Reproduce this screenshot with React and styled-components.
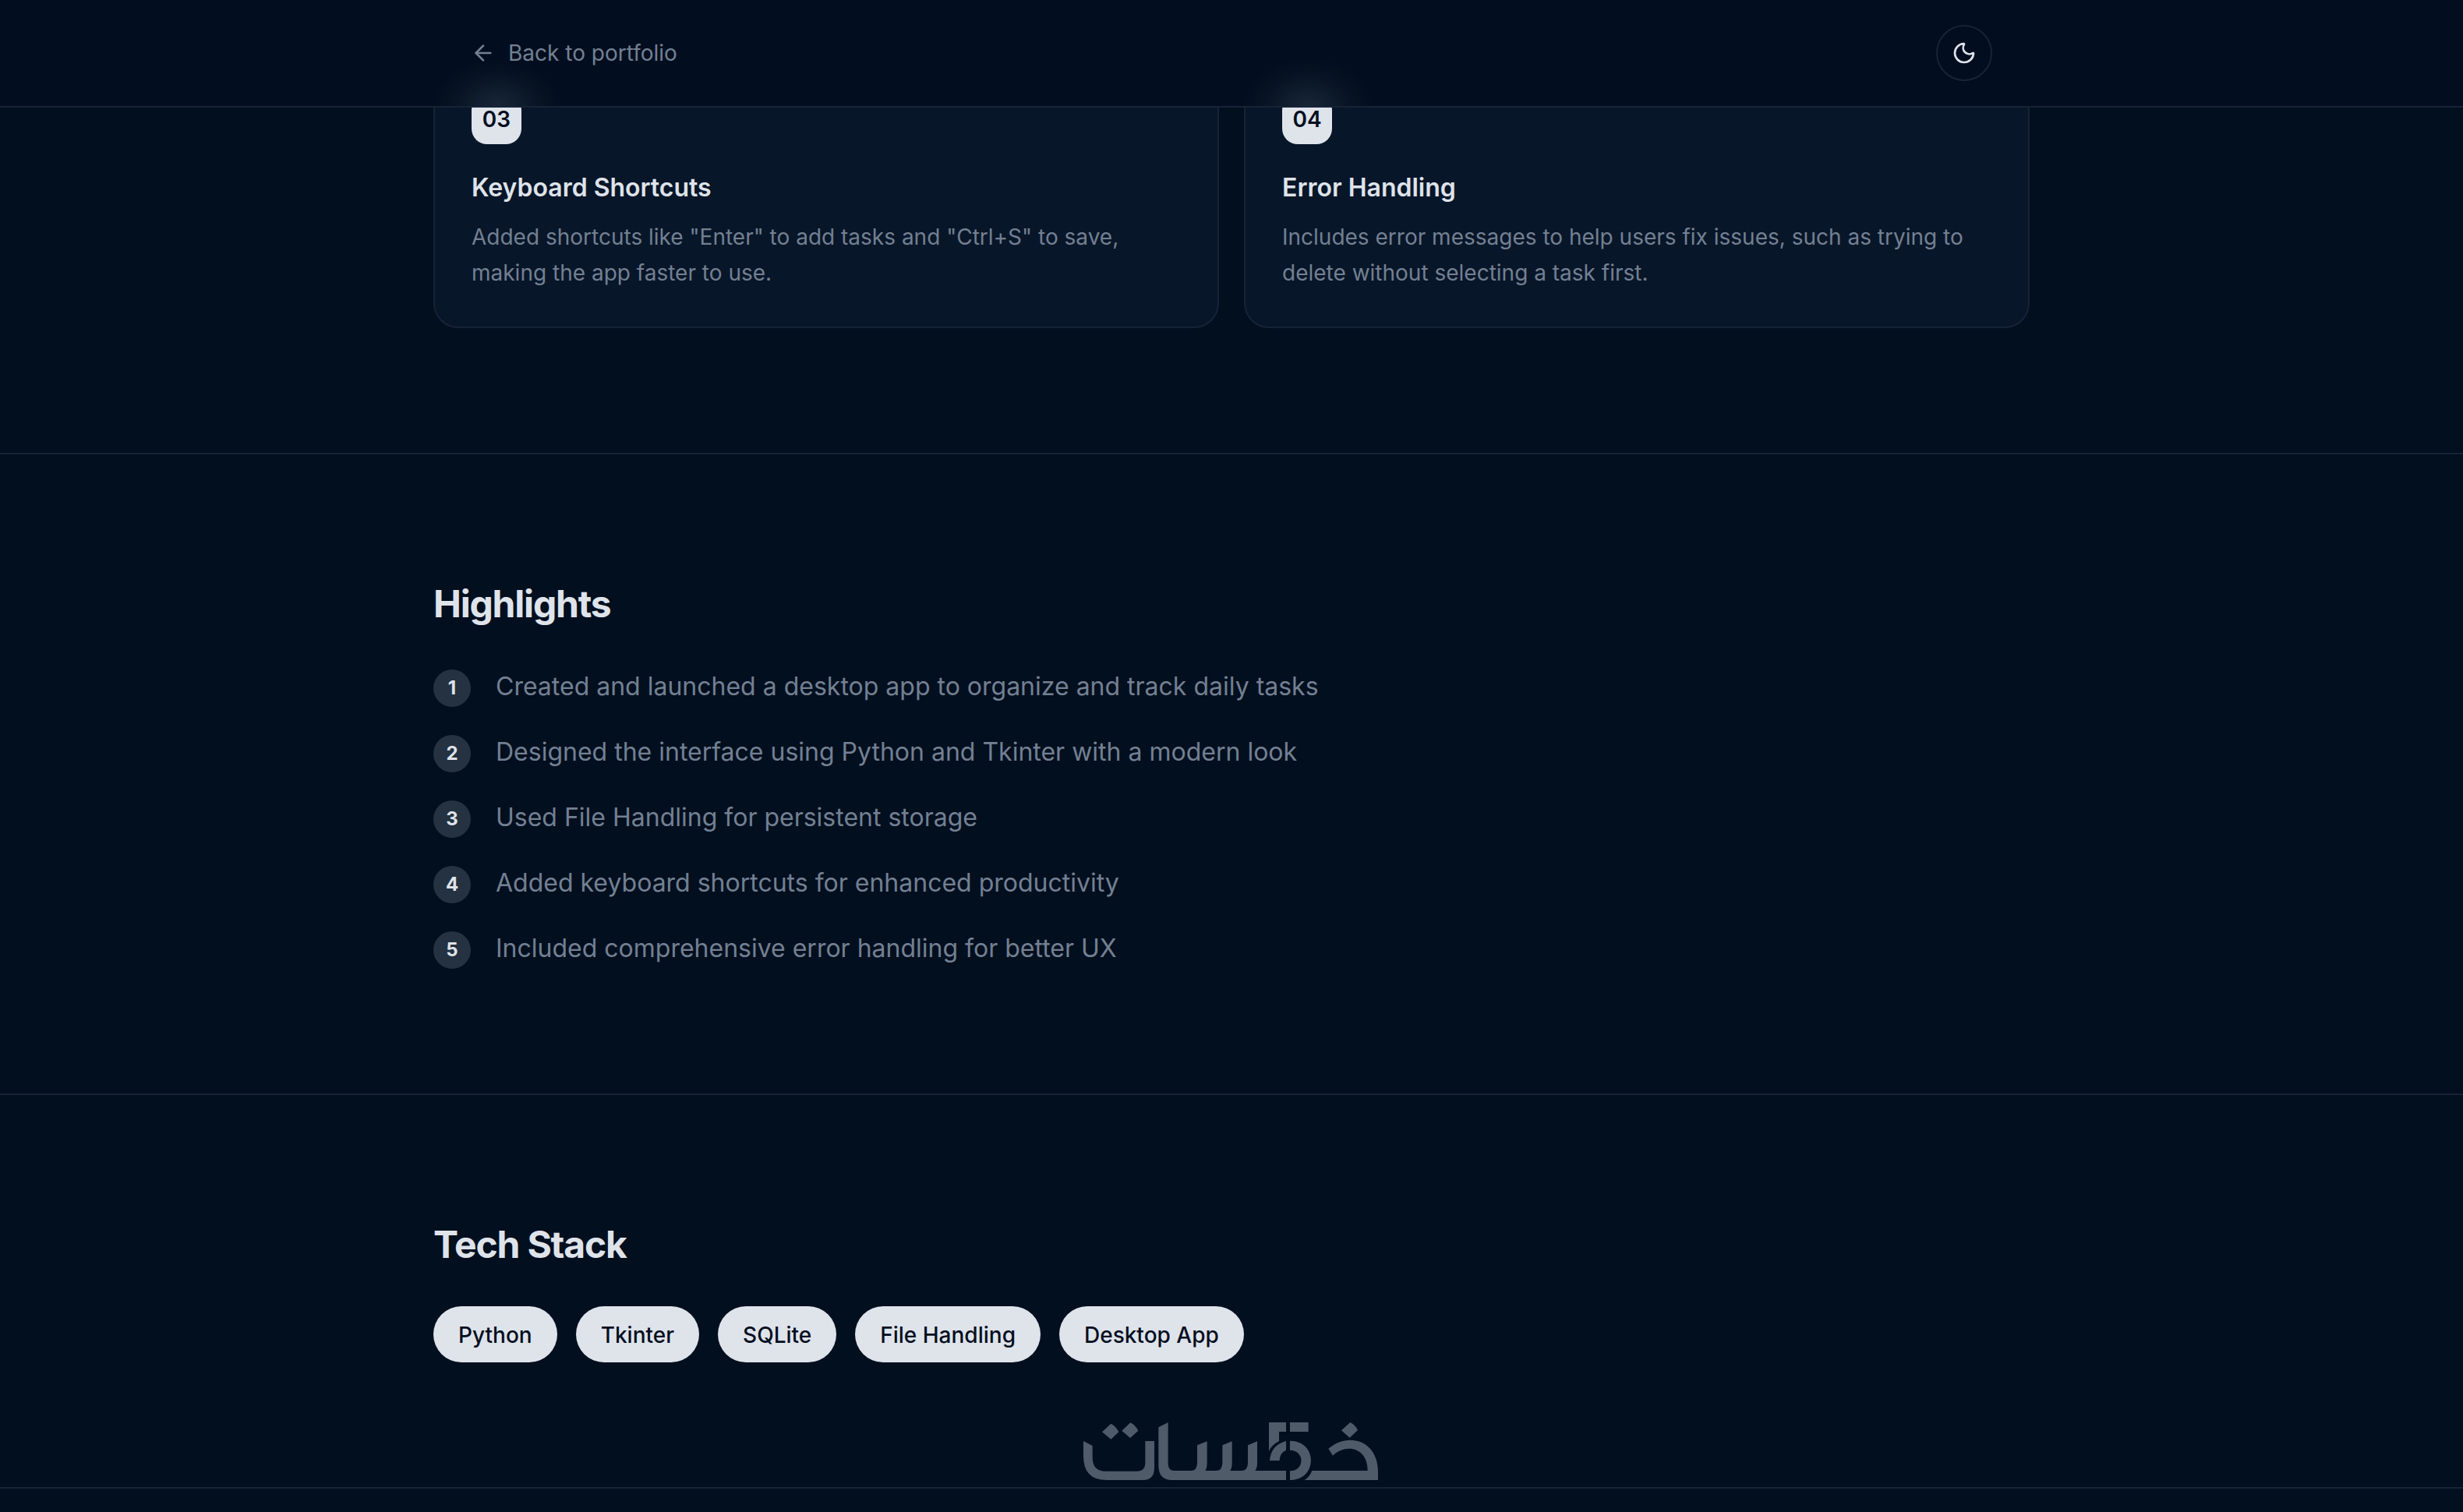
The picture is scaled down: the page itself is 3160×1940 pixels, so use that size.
import React from 'react';
import styled, { createGlobalStyle } from 'styled-components';
import { ArrowLeft, Moon } from 'lucide-react';

const GlobalStyle = createGlobalStyle`
  * {
    box-sizing: border-box;
    margin: 0;
    padding: 0;
  }

  body {
    background: #020f1f;
    color: #dfe3ea;
    font-family: Inter, 'Noto Sans', sans-serif;
    font-size: 32px;
    line-height: 48px;
    overflow: hidden;
    -webkit-font-smoothing: antialiased;
  }
`

const Page = styled.div`
  height: 1940px;
  overflow: hidden;
`

const Header = styled.header`
  position: fixed;
  top: 0;
  left: 0;
  right: 0;
  z-index: 10;
  height: 138px;
  border-bottom: 2px solid #172336;
  background: #020e1f;
`

// the two glows are the number badges shining through the bar
const Nav = styled.nav`
  display: flex;
  align-items: center;
  justify-content: space-between;
  width: 2048px;
  height: 136px;
  margin: 0 auto;
  padding: 0 48px;
  background:
    radial-gradient(84px 64px at 82px 138px, #182536 0%, #142132 20%, #0b1828 50%, #051021 80%, transparent 100%),
    radial-gradient(84px 64px at 1122px 138px, #182536 0%, #142132 20%, #0b1828 50%, #051021 80%, transparent 100%);
`

const BackLink = styled.a`
  display: flex;
  align-items: center;
  gap: 16px;
  color: #738092;
  font-size: 28px;
  line-height: 40px;
`

const ThemeButton = styled.button`
  display: flex;
  align-items: center;
  justify-content: center;
  width: 72px;
  height: 72px;
  border: 2px solid #172336;
  border-radius: 50%;
  background: transparent;
  color: #dfe3ea;
`

const Section = styled.section`
  padding: ${(props) => (props.$top ? props.$top : '160px')} 0 160px;
  border-bottom: 2px solid #162236;
`

const Container = styled.div`
  width: 2048px;
  margin: 0 auto;
`

const CardGrid = styled.div`
  display: grid;
  grid-template-columns: 1fr 1fr;
  gap: 32px;
`

const Card = styled.article`
  padding: 48px 47px 46px;
  border: 2px solid #172336;
  border-radius: 32px;
  background: #081629;
`

const Badge = styled.div`
  display: flex;
  align-items: center;
  justify-content: center;
  width: 64px;
  height: 64px;
  margin-bottom: 32px;
  border-radius: 20px;
  background: #dfe3ea;
  color: #020f1f;
  font-size: 28px;
  font-weight: 600;
  line-height: 40px;
`

const CardTitle = styled.h3`
  margin-bottom: 16px;
  font-size: 32px;
  font-weight: 600;
  line-height: 48px;
`

const CardText = styled.p`
  color: #738092;
  font-size: 28px;
  line-height: 46px;
`

const Heading = styled.h2`
  margin-bottom: ${(props) => (props.$gap ? props.$gap : '48px')};
  font-size: 48px;
  font-weight: 700;
  line-height: 64px;
  letter-spacing: -0.025em;
`

const List = styled.ul`
  display: flex;
  flex-direction: column;
  gap: 32px;
  list-style: none;
`

const ListItem = styled.li`
  display: flex;
  align-items: flex-start;
  gap: 32px;
  color: #738092;
  line-height: 52px;
`

const Marker = styled.span`
  display: flex;
  align-items: center;
  justify-content: center;
  width: 48px;
  height: 48px;
  margin-top: 4px;
  border-radius: 50%;
  background: #243241;
  color: #dfe3ea;
  font-size: 24px;
  font-weight: 700;
  line-height: 32px;
`

const Tags = styled.div`
  display: flex;
  gap: 24px;
`

const Tag = styled.span`
  padding: 17px 32px 15px;
  border-radius: 36px;
  background: #dfe3ea;
  color: #020f1f;
  font-size: 28px;
  font-weight: 500;
  line-height: 40px;
`

const Watermark = styled.div`
  position: fixed;
  top: 1825px;
  left: 1390px;
  z-index: 20;

  svg {
    display: block;
  }
`

const features = [
  {
    number: '03',
    title: 'Keyboard Shortcuts',
    text: 'Added shortcuts like "Enter" to add tasks and "Ctrl+S" to save, making the app faster to use.'
  },
  {
    number: '04',
    title: 'Error Handling',
    text: 'Includes error messages to help users fix issues, such as trying to delete without selecting a task first.'
  }
];

const highlights = [
  'Created and launched a desktop app to organize and track daily tasks',
  'Designed the interface using Python and Tkinter with a modern look',
  'Used File Handling for persistent storage',
  'Added keyboard shortcuts for enhanced productivity',
  'Included comprehensive error handling for better UX'
];

const stack = ['Python', 'Tkinter', 'SQLite', 'File Handling', 'Desktop App'];

// khamsat logo mark, built from strokes and blocks
const Logo = () => (
  <Watermark>
    <svg width="380" height="76" viewBox="0 0 1140 228" fill="#4f5b69">
      <path d="M0 72L35 90V135Q35 188 85 188H205Q238 188 238 155V72H273V175Q273 222 230 222H88Q0 222 0 130Z" />
      <path d="M72 37L106 5Q126 15 136 37L106 65Z" />
      <path d="M148 32L181 1Q201 11 211 32L180 60Z" />
      <path d="M289 19L326 0V160Q326 186 350 186H413Q438 186 438 155V88L476 73V155Q476 175 469 186H510Q535 186 535 155V88L572 73V155Q572 175 565 186H607Q633 186 633 155V88L669 73V155Q669 175 661 186H780V222H340Q289 222 289 165Z" />
      <path d="M714 0H780V36H753V72Q725 87 714 110Z" />
      <path d="M795 0H866V36H795Z" />
      <path d="M780 72V107Q756 117 755 147H717Q722 87 780 72Z" />
      <path d="M795 71C903 71 903 222 795 222V187C853 187 853 107 795 107Z" />
      <path d="M851 222Q870 211 880 186H1094C1094 95 1010 80 960 128L943 101C1020 35 1134 70 1134 190V222Z" />
      <path d="M993 31L1027 0Q1048 11 1056 30L1025 59Z" />
    </svg>
  </Watermark>
);

const App = () => {
  return (
    <Page>
      <GlobalStyle />
      <Header>
        <Nav>
          <BackLink>
            <ArrowLeft size={32} strokeWidth={2} />
            Back to portfolio
          </BackLink>
          <ThemeButton aria-label="Toggle theme">
            <Moon size={32} strokeWidth={2} />
          </ThemeButton>
        </Nav>
      </Header>
      <Section $top="71px">
        <Container>
          <CardGrid>
            {features.map((feature) => (
              <Card key={feature.number}>
                <Badge>{feature.number}</Badge>
                <CardTitle>{feature.title}</CardTitle>
                <CardText>{feature.text}</CardText>
              </Card>
            ))}
          </CardGrid>
        </Container>
      </Section>
      <Section>
        <Container>
          <Heading>Highlights</Heading>
          <List>
            {highlights.map((text, index) => (
              <ListItem key={text}>
                <Marker>{index + 1}</Marker>
                {text}
              </ListItem>
            ))}
          </List>
        </Container>
      </Section>
      <Section>
        <Container>
          <Heading $gap="47px">Tech Stack</Heading>
          <Tags>
            {stack.map((name) => (
              <Tag key={name}>{name}</Tag>
            ))}
          </Tags>
        </Container>
      </Section>
      <Logo />
    </Page>
  );
};

export default App;
